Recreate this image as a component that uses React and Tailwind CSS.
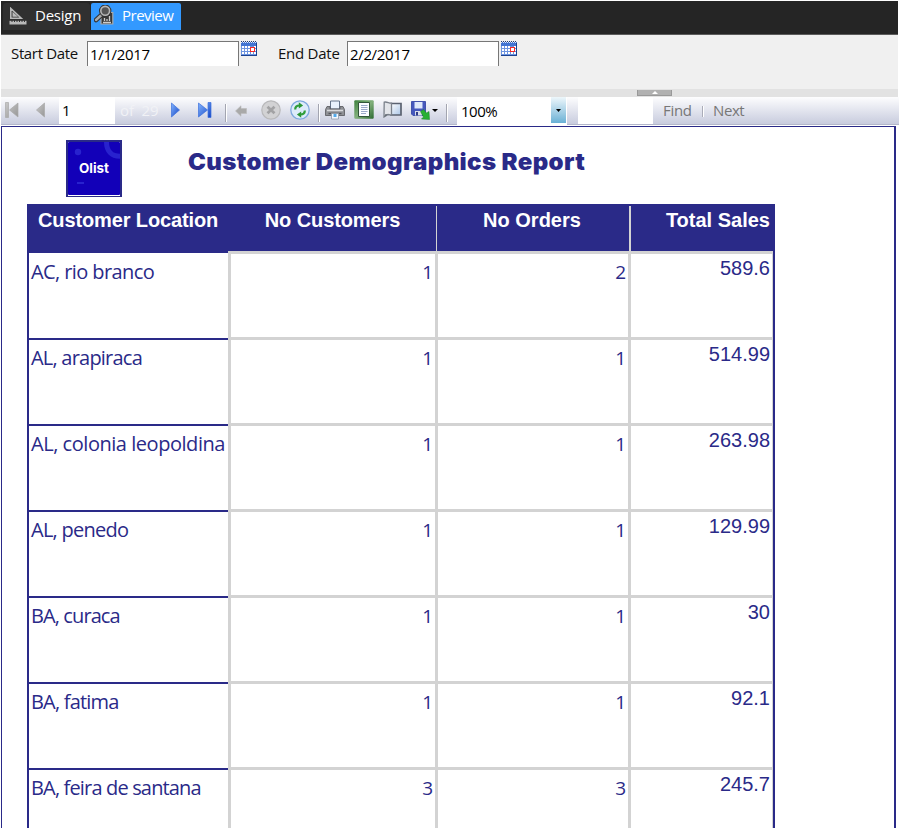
import React from "react";

const rows = [
  ["AC, rio branco", "1", "2", "589.6", "tracking-[-0.6px]"],
  ["AL, arapiraca", "1", "1", "514.99", "tracking-[-0.78px]"],
  ["AL, colonia leopoldina", "1", "1", "263.98", "tracking-[-0.46px]"],
  ["AL, penedo", "1", "1", "129.99", "tracking-[-0.75px]"],
  ["BA, curaca", "1", "1", "30", "tracking-[-0.9px]"],
  ["BA, fatima", "1", "1", "92.1", "tracking-[-0.8px]"],
  ["BA, feira de santana", "3", "3", "245.7", "tracking-[-0.84px]"],
];

function DesignIcon() {
  return (
    <svg className="mt-[4px] ml-2 h-[18px] w-[18px] shrink-0" viewBox="0 0 18 18" fill="none">
      <path d="M1.800 1.500V11.200H12.200Z M4.300 6.500V9H7Z" stroke="#b9b9b9" strokeWidth="1.600" />
      <path d="M.5 13.800H17.500V17.500H.5Z" fill="#b9b9b9" />
      <path d="M3 13v2M5.500 13v2M8 13v2M10.500 13v2M13 13v2M15.500 13v2" stroke="#333" />
    </svg>
  );
}

function PreviewIcon() {
  return (
    <svg className="mt-[2px] ml-[3px] h-5 w-5 shrink-0" viewBox="0 0 20 20" fill="none">
      <path d="M7 7.500H18.800V19H7Z" fill="#383838" stroke="#aaa" strokeWidth="1.200" />
      <path d="M9 17.500h8M10.500 16v-3M13 16v-2M15.500 16v-5" stroke="#ccc" strokeWidth="1.300" />
      <path d="M8.500 9L2 15" stroke="#333" strokeWidth="4.600" strokeLinecap="round" />
      <path d="M8.500 9L2 15" stroke="#aaa" strokeWidth="2.400" strokeLinecap="round" />
      <circle cx="11.200" cy="5.800" r="4.400" fill="#666" stroke="#333" strokeWidth="3.600" />
      <circle cx="11.200" cy="5.800" r="4.400" fill="#555" stroke="#b5b5b5" strokeWidth="1.600" />
    </svg>
  );
}

function Calendar() {
  return (
    <svg className="ml-[2px] h-[15px] w-4 shrink-0" viewBox="0 0 16 15" shapeRendering="crispEdges">
      <path d="M0 1h16v14H0z" fill="#6d94e0" />
      <path d="M0 1h16v4H0z" fill="#4274d2" />
      <path d="M0 .5h16" stroke="#223a70" strokeDasharray="1 1" />
      <path d="M0 1.500h16" stroke="#dfe8fa" strokeDasharray="1 1" />
      <path d="M15 2h1v13H0v-1h15z" fill="#1d428f" />
      <path d="M1 5h2v2H1zM4 5h2v2H4zM7 5h2v2H7zM13 5h2v2h-2zM1 8h2v2H1zM4 8h2v2H4zM7 8h2v2H7zM13 8h2v2h-2zM1 11h2v2H1zM4 11h2v2H4zM7 11h2v2H7zM10 11h2v2h-2zM13 11h2v2h-2z" fill="#fff" />
      <path d="M9 6h5v5H9z" fill="#f02a2a" />
      <path d="M10 7h3v3h-3z" fill="#fff" />
    </svg>
  );
}

function NavIcon({ kind, off, className }) {
  const id = "nav-" + kind;
  return (
    <svg className={"h-4 shrink-0 " + className} viewBox={kind === "first" || kind === "last" ? "0 0 14 16" : "0 0 9 16"}>
      <defs>
        <linearGradient id={id} x2="1" y2="1">
          <stop stopColor={off ? "#c9c9c9" : "#83b5ff"} />
          <stop offset="1" stopColor={off ? "#969696" : "#1444c4"} />
        </linearGradient>
      </defs>
      <g fill={"url(#" + id + ")"} stroke={off ? "#a9a9a9" : "#3c70dc"} strokeWidth=".7">
        {kind === "first" && <path d="M.5.5h3v15h-3zM13 1v14L4.500 8z" />}
        {kind === "prev" && <path d="M8.500 1v14L.5 8z" />}
        {kind === "next" && <path d="M.5 1v14L8.500 8z" />}
        {kind === "last" && <path d="M10 .5h3v15h-3zM.5 1v14L9.500 8z" />}
      </g>
    </svg>
  );
}

function Separator({ className }) {
  return <div className={"mt-[7px] h-[18px] w-[2px] shrink-0 border-l border-r border-l-[#a3a5b0] border-r-white " + className} />;
}

function BackIcon() {
  return (
    <svg className="mt-2 ml-2 h-3 w-3 shrink-0" viewBox="0 0 12 12">
      <path d="M.5 6L6 .8V3.500h5.500v5H6v2.700z" fill="#a9a9a9" stroke="#bbb" strokeWidth=".6" />
    </svg>
  );
}

function StopIcon() {
  return (
    <svg className="mt-[3px] ml-[14px] h-5 w-5 shrink-0" viewBox="0 0 20 20">
      <circle cx="10" cy="10" r="9.200" fill="#d2d2d4" stroke="#b9b9bb" strokeWidth="1.200" />
      <path d="M6.500 6.800l7 6.400M13.500 6.800l-7 6.400" stroke="#a2a2a4" strokeWidth="2.800" />
    </svg>
  );
}

function RefreshIcon() {
  return (
    <svg className="mt-[3px] ml-[9px] h-5 w-5 shrink-0" viewBox="0 0 20 20" fill="none">
      <circle cx="10" cy="10" r="9.200" fill="#dcebfa" stroke="#7ea8de" strokeWidth="1.300" />
      <path d="M5.200 9.500C5.200 6.500 6.800 5.500 9.500 5.500M14.800 10.500c0 3-1.600 4-4.300 4" stroke="#2f9e3a" strokeWidth="2.200" />
      <path d="M8.800 2.200l4.300 3.300-4.300 3.100z M11.200 11.400l-4.300 3.100 4.300 3.300z" fill="#2b9636" />
    </svg>
  );
}

function PrintIcon() {
  return (
    <svg className="mt-[3px] ml-[5px] h-5 w-5 shrink-0" viewBox="0 0 20 20">
      <path d="M5.500 1h9v8h-9z" fill="#e8f1fc" stroke="#657489" />
      <path d="M2 6.500h3V9h10V6.500h3l1.500 3v6H.5v-6z" fill="#8f9196" stroke="#55575c" strokeWidth=".8" />
      <path d="M2 10.500h16" stroke="#d8d9dc" strokeWidth="1.500" />
      <path d="M3.500 13.500h13" stroke="#55575c" strokeWidth="1.400" />
      <path d="M6.500 13.500h7V19h-7z" fill="#f3f8ff" stroke="#8e9aa8" strokeWidth=".8" />
      <path d="M8.500 14h3v3h-3z" fill="#52a9e8" />
    </svg>
  );
}

function LayoutIcon() {
  return (
    <svg className="mt-[3px] ml-[9px] h-[19px] w-5 shrink-0" viewBox="0 0 20 19">
      <defs>
        <linearGradient id="green" x2="1" y2="1">
          <stop stopColor="#3c803c" />
          <stop offset=".5" stopColor="#82b07c" />
          <stop offset="1" stopColor="#2c6a30" />
        </linearGradient>
      </defs>
      <rect x=".3" y=".3" width="19.400" height="18.400" rx="1" fill="url(#green)" />
      <path d="M4.500 2.500h11v14h-11z" fill="#fafcff" stroke="#315539" />
      <path d="M7 5.500h6.500M7 7.500h6.500M7 9.500h6.500M7 11.500h6.500M7 13.500h5" stroke="#9ba9c9" />
    </svg>
  );
}

function PageSetupIcon() {
  return (
    <svg className="mt-1 ml-[9px] h-[17px] w-[19px] shrink-0" viewBox="0 0 19 17">
      <defs>
        <linearGradient id="sheet" x2="1" y2="1">
          <stop stopColor="#fff" />
          <stop offset="1" stopColor="#a9c4e6" />
        </linearGradient>
      </defs>
      <path d="M8 2.500h10v11.500H8z" fill="url(#sheet)" stroke="#5b6270" strokeWidth="1.700" />
      <path d="M1.200 1.200c2.300-1 4.800 1.200 7.300 1v12l-3.500-.7L1 16z" fill="#e3e5ea" stroke="#7b818b" strokeWidth="1.300" />
      <path d="M1 16l1.500-3 2.500.5z" fill="#646b76" />
    </svg>
  );
}

function ExportIcon() {
  return (
    <svg className="mt-1 ml-[9px] h-[19px] w-[19px] shrink-0" viewBox="0 0 19 19">
      <path d="M.5.500h14v14H2L.5 13z" fill="#4557bd" stroke="#4352ac" />
      <path d="M3.500 1h8v6.500h-8z" fill="#dfe8fa" />
      <path d="M4 10h7v4.500H4z" fill="#d9dde9" />
      <path d="M5 11h2v3.500H5z" fill="#303c89" />
      <path d="M9.500 10.500l3-2 3 3.500 2.500-1.500.5 8-8-.5 2-2z" fill="#28b032" stroke="#198126" strokeWidth=".5" />
    </svg>
  );
}

function Logo() {
  return (
    <svg className="ml-16 mt-[13px] h-[57px] w-14 shrink-0" viewBox="0 0 56 57">
      <path d="M0 0h56v57H0z" fill="#2a2a88" />
      <path d="M2 2h52v54H2z" fill="#fff" />
      <path d="M2 3q0-1 1-1h50q1 0 1 1v51q0 1-1 1H3q-1 0-1-1z" fill="#1200b8" />
      <circle cx="12" cy="12" r="3.200" fill="#2822ce" />
      <path d="M40.500 2c0 9 5 14.300 13.500 14.300" fill="none" stroke="#2822ce" strokeWidth="5" />
      <path d="M11 43h7" stroke="#2822ce" strokeWidth="2" />
      <text x="13" y="32.500" fill="#fff" fontFamily="Inter" fontWeight="700" fontSize="13.500" textLength="30" lengthAdjust="spacingAndGlyphs">Olist</text>
    </svg>
  );
}

const ui = "font-['Open_Sans','Noto_Sans',sans-serif] whitespace-nowrap ";

export default function App() {
  return (
    <div className="flex h-[828px] w-[899px] flex-col overflow-hidden bg-white pl-px pt-px">
      <div className="flex h-[34px] w-[897px] shrink-0 border-b border-[#5c5c5c] bg-[#252525] pl-[2px] pt-[2px]">
        <div className="flex h-[27px] w-[87px] rounded-t-[3px] bg-[#303030]">
          <div className="-ml-[2px] flex"><DesignIcon /></div>
          <span className={ui + "ml-[8px] text-[15px] leading-6 tracking-[-0.25px] text-white"}>Design</span>
        </div>
        <div className="ml-px flex h-[27px] w-[90px] rounded-t-[2px] bg-[#3399ff]">
          <PreviewIcon />
          <span className={ui + "ml-[8px] text-[15px] leading-6 tracking-[-0.5px] text-white"}>Preview</span>
        </div>
      </div>

      <div className="flex h-[54px] w-[897px] shrink-0 bg-[#f0f0f0] pl-[10px] pt-[6px]">
        <span className={ui + "w-[76px] text-[15px] leading-6 tracking-[-0.35px] text-[#111]"}>Start Date</span>
        <div className="h-[25px] w-[152px] border-l border-r border-t border-[#777] bg-white pl-[2px]">
          <span className={ui + "block text-[15px] leading-[25px] tracking-[-0.35px] text-black"}>1/1/2017</span>
        </div>
        <Calendar />
        <span className={ui + "ml-[21px] w-[69px] text-[15px] leading-6 tracking-[-0.25px] text-[#111]"}>End Date</span>
        <div className="h-[25px] w-[152px] border-l border-r border-t border-[#777] bg-white pl-[2px]">
          <span className={ui + "block text-[15px] leading-[25px] tracking-[-0.35px] text-black"}>2/2/2017</span>
        </div>
        <Calendar />
      </div>

      <div className="flex h-2 w-[897px] shrink-0 bg-[#e2e2e2] pl-[636px] pt-px">
        <div className="flex h-[6px] w-[35px] items-center justify-center border-x border-b border-[#999] bg-[#b1b1b1]">
          <svg className="h-[3px] w-[6px]" viewBox="0 0 6 3"><path d="M3 0l3 3H0z" fill="#fff" /></svg>
        </div>
      </div>

      <div className="flex h-[28px] w-[898px] shrink-0 items-start border-b border-[#b3b7cb] bg-linear-to-b from-[#fdfdfe] to-[#c8ccde]">
        <NavIcon kind="first" off className="ml-1 mt-[5px] w-[14px]" />
        <NavIcon kind="prev" off className="ml-[17px] mt-[5px] w-[9px]" />
        <div className="ml-[14px] h-[27px] w-14 bg-white pl-[3px]">
          <span className={ui + "block text-[15px] leading-[27px] text-black"}>1</span>
        </div>
        <span className={ui + "ml-[5px] w-[39px] text-[15px] leading-[27px] tracking-[-0.1px] text-[#f1f2f6]"}>of&nbsp; 29</span>
        <NavIcon kind="next" className="ml-[12px] mt-[5px] w-[9px]" />
        <NavIcon kind="last" className="ml-[18px] mt-[5px] w-[14px]" />
        <Separator className="ml-[13px]" />
        <BackIcon />
        <StopIcon />
        <RefreshIcon />
        <Separator className="ml-[8px]" />
        <PrintIcon />
        <LayoutIcon />
        <PageSetupIcon />
        <ExportIcon />
        <svg className="ml-[2px] mt-3 h-[3px] w-[6px]" viewBox="0 0 6 3"><path d="M0 0h6L3 3z" fill="#000" /></svg>
        <Separator className="ml-2" />
        <div className="ml-[9px] flex h-[28px] w-[110px] shrink-0 bg-white">
          <span className={ui + "ml-1 w-[90px] text-[15px] leading-[29px] tracking-[-0.5px] text-black"}>100%</span>
          <div className="flex h-[26px] w-[15px] items-center justify-center bg-linear-to-b from-[#eef7fb] to-[#69b1d5]">
            <svg className="h-[3px] w-[5px]" viewBox="0 0 5 3"><path d="M0 0h5L2.500 3z" fill="#000" /></svg>
          </div>
        </div>
        <div className="ml-[11px] h-[27px] w-[75px] shrink-0 bg-white" />
        <span className={ui + "ml-[10px] w-[29px] text-[15px] leading-[27px] tracking-[-0.3px] text-[#777]"}>Find</span>
        <div className="ml-[10px] mt-[9px] h-[11px] w-[2px] border-l border-r border-l-[#aaacb8] border-r-white" />
        <span className={ui + "ml-[9px] text-[15px] leading-[27px] tracking-[-0.4px] text-[#777]"}>Next</span>
      </div>

      <div className="mt-px flex h-[702px] w-[895px] shrink-0 flex-col border-l border-r-2 border-t border-[#2a2a88]">
        <div className="flex h-[77px] shrink-0 items-start">
          <Logo />
          <h1 className="ml-[66px] mt-[20px] origin-left scale-x-[1.045] whitespace-nowrap font-[Inter,sans-serif] text-[23px] font-black leading-[30px] tracking-[0.35px] text-[#2a2a88]">Customer Demographics Report</h1>
        </div>

        <div className="ml-[25px] flex w-[748px] flex-col border-l-2 border-r-2 border-[#2a2a88]">
          <div className="flex h-[47px] bg-[#2a2a88] pt-[2px] font-['Liberation_Sans',Arial,sans-serif] text-[20px] font-bold leading-7 text-white">
            <div className="w-[200px] whitespace-nowrap pl-[9px] tracking-[-0.12px]">Customer Location</div>
            <div className="w-[207px] whitespace-nowrap text-center tracking-[-0.1px]">No Customers</div>
            <div className="w-[193px] whitespace-nowrap border-l border-[#d3d3d3] pr-[2px] text-center">No Orders</div>
            <div className="w-[144px] whitespace-nowrap border-l-2 border-[#d3d3d3] pr-[3px] text-right">Total Sales</div>
          </div>
          {rows.map(([place, customers, orders, sales, spacing], i) => (
            <div key={place} className="flex h-[86px] shrink-0 text-[#2a2a88]">
              <div className={"w-[199px] " + (i === 0 ? "bg-[#2a2a88] pt-[2px]" : "bg-white pt-px")}>
                <div className={ui + (i === 0 ? "h-[84px] bg-white pl-[2px] pt-1 " : "h-[85px] border-t-2 border-[#2a2a88] pl-[2px] pt-[3px] ") + "text-[20px] leading-[30px] " + spacing}>{place}</div>
              </div>
              <div className={ui + "w-[207px] border-l-3 border-t-3 border-[#d3d3d3] pr-[2px] pt-[3px] text-right text-[19px] leading-[30px]"}>{customers}</div>
              <div className={ui + "w-[193px] border-l-3 border-t-3 border-[#d3d3d3] pr-[2px] pt-[3px] text-right text-[19px] leading-[30px]"}>{orders}</div>
              <div className="w-[145px] border-l-3 border-r border-t-3 border-[#d3d3d3] pr-[2px] text-right font-['Liberation_Sans',Arial,sans-serif] text-[20px] leading-7">{sales}</div>
            </div>
          ))}
        </div>
      </div>
    </div>
  );
}
